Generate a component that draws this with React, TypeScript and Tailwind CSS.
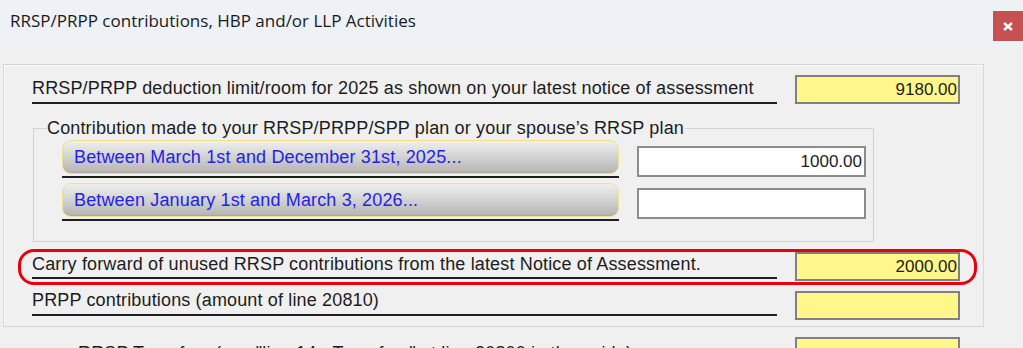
import React from "react";

const font = "font-['Liberation_Sans',Arial,sans-serif]";
const label = font + " text-[18px] tracking-[0.15px] text-[#1c1c1c] leading-none";
const boxText = font + " text-[17px] text-[#1c1c1c] leading-none";
const yellowBox =
  "h-[29px] w-[165px] bg-[#fff78a] border-2 border-[#808080] flex items-center justify-end pr-[1px] " + boxText;
const whiteBox =
  "h-[31px] w-[229px] bg-white border-2 border-[#8c8c8c] flex items-center justify-end pr-[2px] " + boxText;

const LabelLine = ({ text }: { text: string }) => (
  <div className="w-[745px] h-[29px] flex items-end pb-[5px] border-b-2 border-[#1f1f1f]">
    <span className={label}>{text}</span>
  </div>
);

const RangeButton = ({ text }: { text: string }) => (
  <div className="w-[557px] flex flex-col border-b-2 border-[#1f1f1f] pb-[2px]">
    <button className="h-[34px] w-full rounded-[9px] border border-[#efe08c] bg-gradient-to-b from-[#efefef] via-[#d2d2d2] to-[#b4b4b4] flex items-center pl-[11px] shadow-[inset_0_-1px_0_#a8a8a8]">
      <span className={font + " text-[18px] tracking-[0.15px] text-[#2323e6] leading-none"}>{text}</span>
    </button>
  </div>
);

export default function App() {
  return (
    <div className="w-[1023px] h-[348px] overflow-hidden bg-[#f0f0f0]">
      <div className="h-[45px] bg-[#eef2f7] flex justify-between">
        <div className="pl-[10px] pt-[8px] font-['Open_Sans',sans-serif] text-[17px] text-[#1a1a1a]">
          RRSP/PRPP contributions, HBP and/or LLP Activities
        </div>
        <div className="mt-[11px] w-[30px] h-[30px] bg-[#c75050] flex items-center justify-center">
          <svg width="10" height="9" viewBox="0 0 10 9">
            <path d="M1 1 L9 8 M9 1 L1 8" stroke="white" strokeWidth="2.4" />
          </svg>
        </div>
      </div>

      <div className="pt-[19px] pl-[3px]">
        <div className="w-[981px] h-[263px] border border-[#d6d6d6] shadow-[inset_1px_1px_0_#fafafa]">
          <div className="mt-[10px] flex">
            <div className="ml-[28px]">
              <LabelLine text="RRSP/PRPP deduction limit/room for 2025 as shown on your latest notice of assessment" />
            </div>
            <div className={"ml-[18px] " + yellowBox}>9180.00</div>
          </div>

          <fieldset className="mt-[15px] ml-[29px] w-[841px] h-[123px] border border-[#d3d3d3]">
            <legend className={"ml-[12px] px-[1px] " + label}>
              Contribution made to your RRSP/PRPP/SPP plan or your spouse’s RRSP plan
            </legend>
            <div className="flex mt-[3px] pl-[28px]">
              <RangeButton text="Between March 1st and December 31st, 2025..." />
              <div className={"ml-[18px] mt-[6px] " + whiteBox}>1000.00</div>
            </div>
            <div className="flex mt-[5px] pl-[28px]">
              <RangeButton text="Between January 1st and March 3, 2026..." />
              <div className={"ml-[18px] mt-[5px] " + whiteBox}></div>
            </div>
          </fieldset>

          <div className="mt-[7px] ml-[14px] w-[959px] h-[36px] border-[3px] border-[#e8000b] rounded-[16px] flex">
            <div className="ml-[11px] h-[27px]">
              <div className="w-[745px] h-[27px] flex items-end pb-[4px] border-b-2 border-[#1f1f1f]">
                <span className={label}>
                  Carry forward of unused RRSP contributions from the latest Notice of Assessment.
                </span>
              </div>
            </div>
            <div className={"ml-[18px] " + yellowBox}>2000.00</div>
          </div>

          <div className="mt-[6px] flex">
            <div className="ml-[28px]">
              <div className="w-[745px] h-[25px] flex items-end pb-[5px] border-b-2 border-[#1f1f1f]">
                <span className={label}>PRPP contributions (amount of line 20810)</span>
              </div>
            </div>
            <div className={"ml-[18px] " + yellowBox}></div>
          </div>
        </div>

        <div className="flex mt-[10px]">
          <div className="ml-[75px] w-[717px] pt-[4px]">
            <span className={label}>
              RRSP Transfers (see "line 14 - Transfers" at line 20800 in the guide)
            </span>
          </div>
          <div className={yellowBox}></div>
        </div>
      </div>
    </div>
  );
}
